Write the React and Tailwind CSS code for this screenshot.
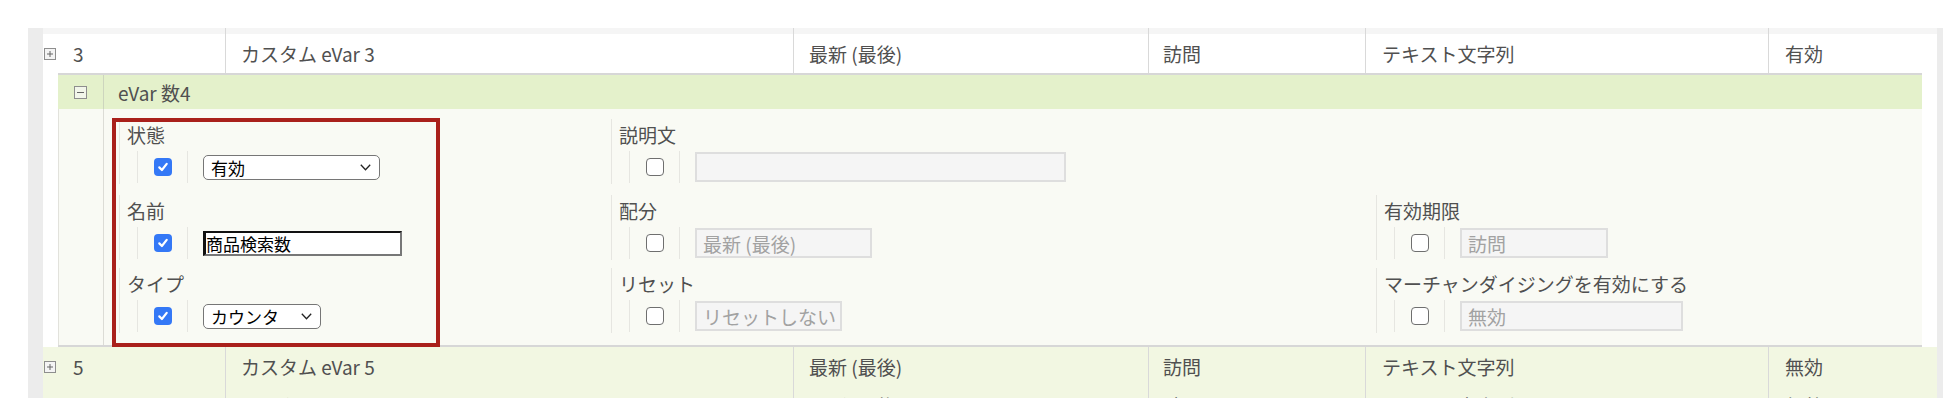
import React from "react";

const FONT = { fontFamily: '"Noto Sans CJK JP", "Noto Sans", sans-serif' };

function PlusIcon() {
  return (
    <svg width="12" height="12" viewBox="0 0 12 12" className="shrink-0">
      <rect x="0.5" y="0.5" width="11" height="11" fill="#f4f4f4" stroke="#8e8e8e" />
      <path d="M3 6h6M6 3v6" stroke="#666" strokeWidth="1" />
    </svg>
  );
}

function MinusIcon() {
  return (
    <svg width="13" height="13" viewBox="0 0 13 13" className="shrink-0">
      <rect x="0.5" y="0.5" width="12" height="12" fill="#f2f6ea" stroke="#8e8e8e" />
      <path d="M3 6.5h7" stroke="#666" strokeWidth="1" />
    </svg>
  );
}

function Checked() {
  return (
    <div className="w-[18px] h-[18px] rounded-[4px] bg-[#3478f6] flex items-center justify-center">
      <svg width="12" height="12" viewBox="0 0 12 12">
        <path d="M2.3 6.4 L4.9 9 L9.7 2.9" stroke="white" strokeWidth="2.2" fill="none" strokeLinecap="round" strokeLinejoin="round" />
      </svg>
    </div>
  );
}

function Unchecked() {
  return <div className="w-[18px] h-[18px] rounded-[4px] bg-white border-[1.5px] border-[#6f6f6f]" />;
}

function Chevron() {
  return (
    <svg width="11" height="7" viewBox="0 0 11 7">
      <path d="M0.8 0.8 L5.5 5.8 L10.2 0.8" stroke="#222" strokeWidth="1.3" fill="none" />
    </svg>
  );
}

function Group({ label, checked, children, className }) {
  return (
    <div className={`h-[65px] border-l border-[#e6e6e1] shrink-0 ${className}`}>
      <div className="h-[31px] pl-[7px] flex items-center text-[19px] leading-none text-[#505050] whitespace-nowrap">{label}</div>
      <div className="flex h-[34px] pt-px pb-px">
        <div className="w-[17px] shrink-0" />
        <div className="w-[51px] shrink-0 border-x border-[#e6e6e1] flex items-center justify-center">
          {checked ? <Checked /> : <Unchecked />}
        </div>
        <div className="pl-[15px] flex items-center">{children}</div>
      </div>
    </div>
  );
}

function Disabled({ w, text }) {
  return (
    <div className={`${w} h-[30px] bg-[#f5f5f5] border-2 border-[#dedede] flex items-center pl-[6px] text-[19px] leading-none text-[#a2a2a2] whitespace-nowrap overflow-hidden`}>
      {text}
    </div>
  );
}

function Select({ w, text }) {
  return (
    <div className={`${w} h-[25px] bg-white border border-[#767676] rounded-[5px] flex items-center justify-between pl-[7px] pr-[8px] text-[17px] leading-none text-black`}>
      <span>{text}</span>
      <Chevron />
    </div>
  );
}

function DataRow({ num, name, alloc, exp, type, status, bg }) {
  return (
    <div className={`flex h-[39px] text-[19px] leading-none text-[#505050] ${bg}`}>
      <div className="w-[182px] shrink-0 flex items-center pl-px">
        <PlusIcon />
        <span className="ml-[17px]">{num}</span>
      </div>
      <div className="w-[568px] shrink-0 border-l border-[#d9d9d9] flex items-center pl-[15px]">{name}</div>
      <div className="w-[355px] shrink-0 border-l border-[#d9d9d9] flex items-center pl-[15px]">{alloc}</div>
      <div className="w-[217px] shrink-0 border-l border-[#d9d9d9] flex items-center pl-[14px]">{exp}</div>
      <div className="w-[403px] shrink-0 border-l border-[#d9d9d9] flex items-center pl-[16px]">{type}</div>
      <div className="w-[169px] shrink-0 border-l border-[#d9d9d9] flex items-center pl-[16px]">{status}</div>
    </div>
  );
}

export default function App() {
  return (
    <div className="relative w-[1958px] h-[418px] bg-white overflow-hidden" style={FONT}>
      <div className="pt-[28px] pl-[28px]">
        <div className="flex w-[1915px] h-[370px] bg-[#ececec] overflow-hidden">
          <div className="w-[15px] shrink-0" />
          <div className="w-[1894px] shrink-0 bg-white overflow-hidden">
            <div className="flex h-[6px] bg-[#f5f5f5]">
              <div className="w-[182px] shrink-0" />
              <div className="w-[568px] shrink-0 border-l border-[#d9d9d9]" />
              <div className="w-[355px] shrink-0 border-l border-[#d9d9d9]" />
              <div className="w-[217px] shrink-0 border-l border-[#d9d9d9]" />
              <div className="w-[403px] shrink-0 border-l border-[#d9d9d9]" />
              <div className="w-[169px] shrink-0 border-l border-[#d9d9d9]" />
            </div>

            <DataRow num="3" name="カスタム eVar 3" alloc="最新 (最後)" exp="訪問" type="テキスト文字列" status="有効" bg="bg-white" />

            <div className="px-[15px]">
              <div className="border-y-2 border-[#d7d7d7]">
                <div className="flex h-[34px] bg-[#e4f1cb]">
                  <div className="w-[46px] shrink-0 border-r border-[#cdd5be] flex items-center pl-[16px]">
                    <MinusIcon />
                  </div>
                  <div className="flex items-center pl-[14px] text-[19px] leading-none text-[#505050]">eVar 数4</div>
                </div>
                <div className="flex h-[236px] bg-[#f9faf4] border-l border-[#e2e2dc]">
                  <div className="w-[45px] shrink-0 border-r border-[#dcdcd6]" />
                  <div className="flex-1 pl-[15px] pt-[10px]">
                    <div className="flex">
                      <Group label="状態" checked className="w-[492px]">
                        <Select w="w-[177px]" text="有効" />
                      </Group>
                      <Group label="説明文" className="w-[765px]">
                        <Disabled w="w-[371px]" text="" />
                      </Group>
                    </div>
                    <div className="flex mt-[11px]">
                      <Group label="名前" checked className="w-[492px]">
                        <div className="w-[199px] h-[25px] bg-white border-t-2 border-l-[3px] border-r-2 border-b-2 border-t-[#111] border-l-[#111] border-r-[#777] border-b-[#777] flex items-center text-[17px] leading-none text-black">
                          商品検索数
                        </div>
                      </Group>
                      <Group label="配分" className="w-[765px]">
                        <Disabled w="w-[177px]" text="最新 (最後)" />
                      </Group>
                      <Group label="有効期限" className="w-[500px]">
                        <Disabled w="w-[148px]" text="訪問" />
                      </Group>
                    </div>
                    <div className="flex mt-[8px]">
                      <Group label="タイプ" checked className="w-[492px]">
                        <Select w="w-[118px]" text="カウンタ" />
                      </Group>
                      <Group label="リセット" className="w-[765px]">
                        <Disabled w="w-[147px]" text="リセットしない" />
                      </Group>
                      <Group label="マーチャンダイジングを有効にする" className="w-[500px]">
                        <Disabled w="w-[223px]" text="無効" />
                      </Group>
                    </div>
                  </div>
                </div>
              </div>
            </div>

            <DataRow num="5" name="カスタム eVar 5" alloc="最新 (最後)" exp="訪問" type="テキスト文字列" status="無効" bg="bg-[#f2f7e2]" />
            <DataRow num="6" name="カスタム eVar 6" alloc="最新 (最後)" exp="訪問" type="テキスト文字列" status="無効" bg="bg-[#f2f7e2]" />
          </div>
          <div className="w-[6px] shrink-0" />
        </div>
      </div>
      <div className="absolute left-[112px] top-[118px] w-[328px] h-[229px] border-4 border-[#a9201b]" />
    </div>
  );
}
